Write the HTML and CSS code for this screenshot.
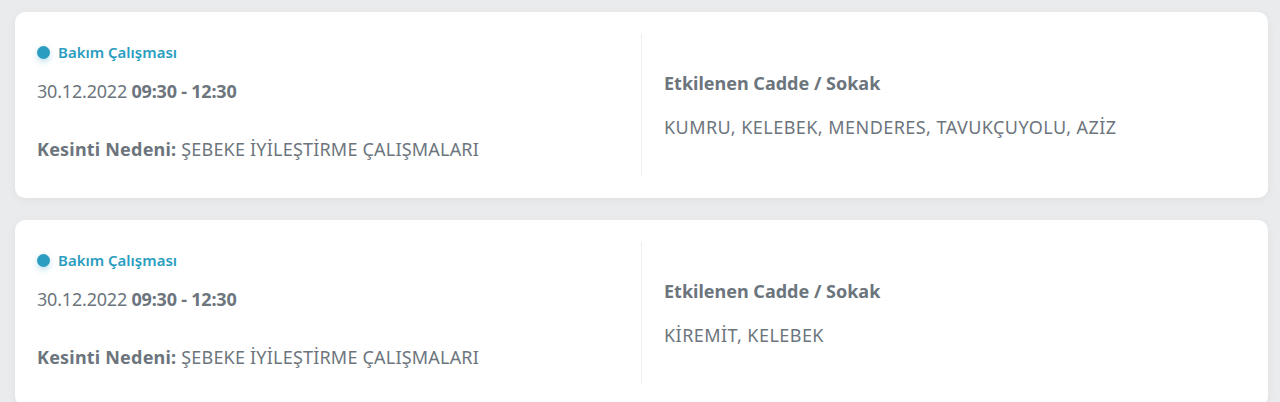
FILE: index.html
```
<!DOCTYPE html>
<html lang="tr">
<head>
    <meta charset="UTF-8">
    <meta name="viewport" content="width=device-width, initial-scale=1.0">
    <title>Planlı Kesintiler</title>
    <link rel="stylesheet" href="styles.css">
</head>
<body>
    <div class="outage-list">
        <div class="outage-card">
            <div class="outage-info">
                <div class="outage-type"><span class="outage-dot"></span>Bakım Çalışması</div>
                <div class="outage-date">30.12.2022 <strong>09:30 - 12:30</strong></div>
                <div class="outage-reason"><strong>Kesinti Nedeni:</strong> ŞEBEKE İYİLEŞTİRME ÇALIŞMALARI</div>
            </div>
            <div class="outage-streets">
                <div class="streets-title">Etkilenen Cadde / Sokak</div>
                <div class="streets-list">KUMRU, KELEBEK, MENDERES, TAVUKÇUYOLU, AZİZ</div>
            </div>
        </div>

        <div class="outage-card">
            <div class="outage-info">
                <div class="outage-type"><span class="outage-dot"></span>Bakım Çalışması</div>
                <div class="outage-date">30.12.2022 <strong>09:30 - 12:30</strong></div>
                <div class="outage-reason"><strong>Kesinti Nedeni:</strong> ŞEBEKE İYİLEŞTİRME ÇALIŞMALARI</div>
            </div>
            <div class="outage-streets">
                <div class="streets-title">Etkilenen Cadde / Sokak</div>
                <div class="streets-list">KİREMİT, KELEBEK</div>
            </div>
        </div>
    </div>
</body>
</html>
```

FILE: styles.css
```
* {
    margin: 0;
    padding: 0;
    box-sizing: border-box;
}

body {
    font-family: "Noto Sans", Arial, sans-serif;
    background-color: #e9ebed;
    color: #6c757d;
    padding: 12px 12px 0 15px;
}

.outage-card {
    display: flex;
    background: #fff;
    border-radius: 10px;
    padding: 22px 0;
    margin-bottom: 22px;
    box-shadow: 0 2px 10px rgba(0, 0, 0, 0.05);
}

.outage-info {
    flex: 1;
    padding: 0 22px 15px;
}

.outage-type {
    display: flex;
    align-items: center;
    margin-top: 8px;
    height: 20px;
    font-size: 15px;
    font-weight: 600;
    color: #2a9dc0;
}

.outage-dot {
    width: 13px;
    height: 13px;
    border-radius: 50%;
    background: #2a9dc0;
    margin-right: 8px;
    box-shadow: 0 3px 6px rgba(42, 157, 192, 0.3);
}

.outage-date {
    margin-top: 17px;
    line-height: 24px;
    font-size: 18px;
    letter-spacing: -0.2px;
}

.outage-date strong,
.outage-reason strong {
    font-weight: 700;
}

.outage-reason {
    margin-top: 34px;
    line-height: 24px;
    font-size: 18px;
    letter-spacing: 0.2px;
}

.outage-streets {
    flex: 1;
    border-left: 1px solid #eceef0;
    padding: 0 22px;
    display: flex;
    flex-direction: column;
    justify-content: center;
}

.streets-title {
    line-height: 24px;
    font-size: 18px;
    font-weight: 700;
}

.streets-list {
    margin-top: 20px;
    line-height: 24px;
    font-size: 18px;
    letter-spacing: 0.45px;
}
```
